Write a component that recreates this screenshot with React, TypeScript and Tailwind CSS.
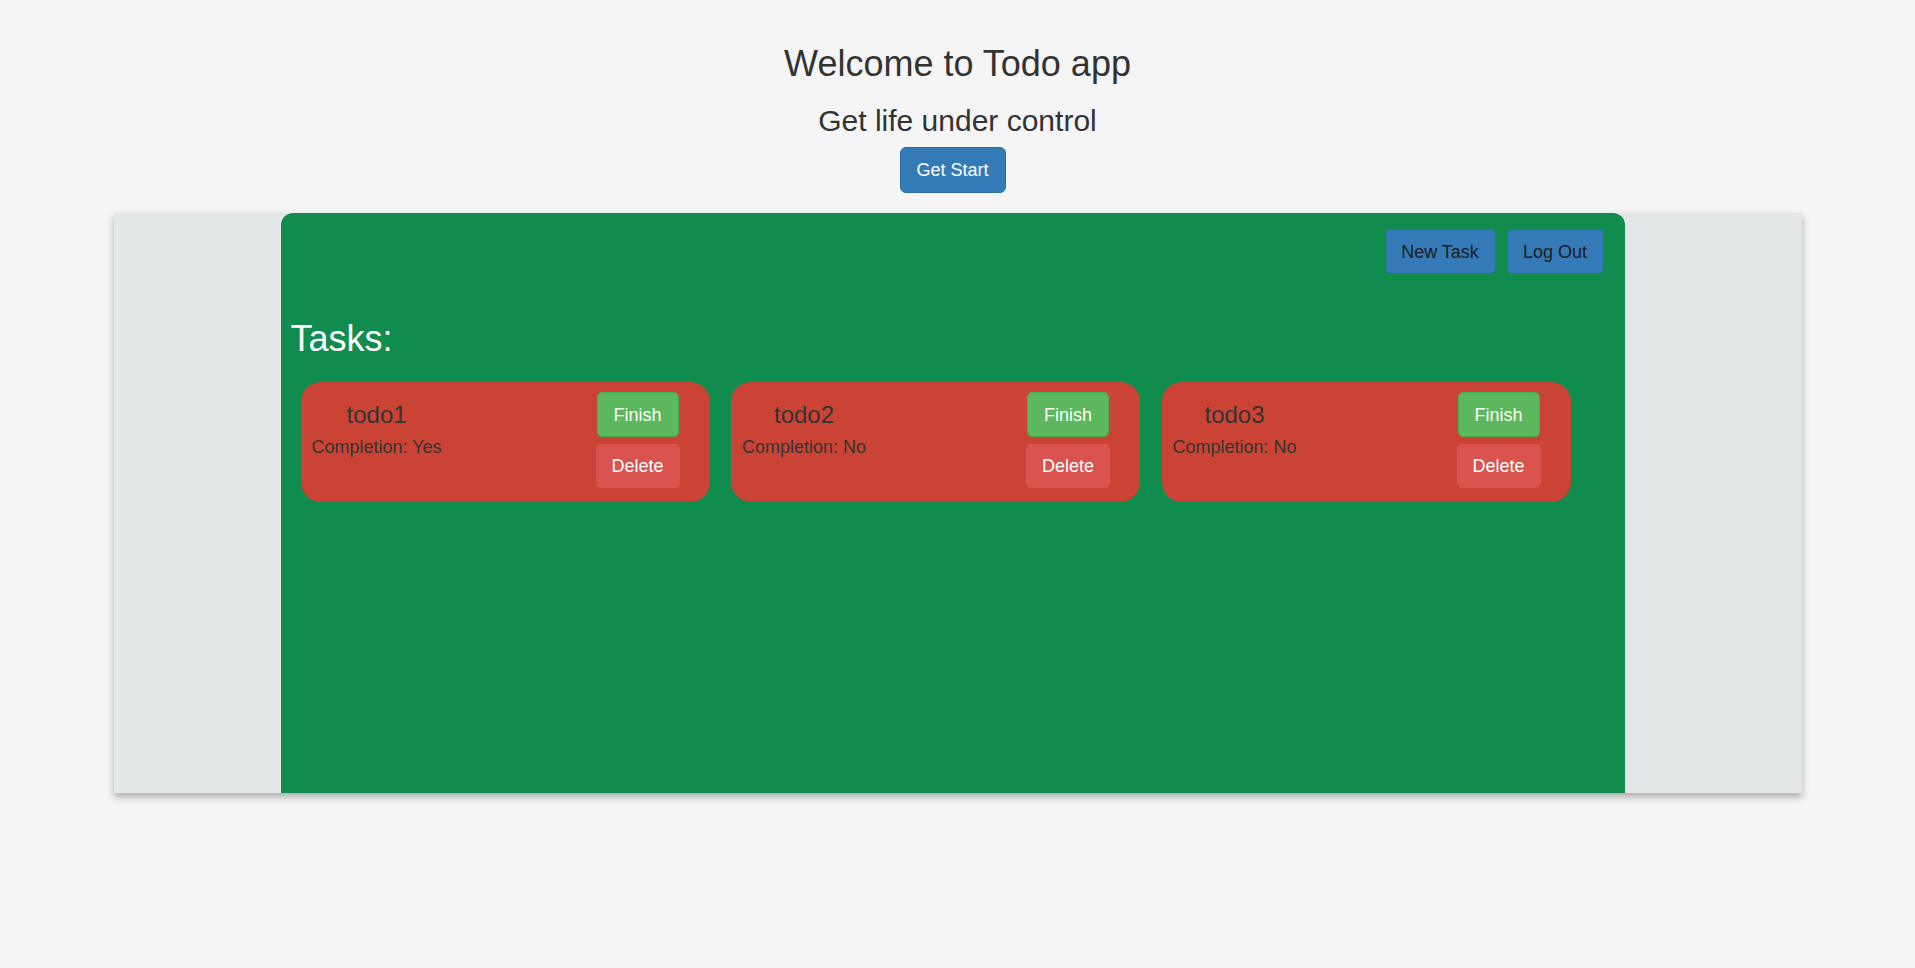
import React from "react";

const todos = [
  { name: "todo1", done: "Yes" },
  { name: "todo2", done: "No" },
  { name: "todo3", done: "No" },
];

export default function App() {
  return (
    <div className="min-h-[968px] bg-[#f5f5f5] font-['Liberation_Sans',Arial,sans-serif] text-[#333]">
      <div className="flex flex-col items-center pt-[44px]">
        <h1 className="text-[36px] leading-[40px] font-normal">Welcome to Todo app</h1>
        <h2 className="mt-[20px] text-[30px] leading-[33px] font-normal">Get life under control</h2>
        <button className="mr-[10px] mt-[10px] h-[46px] w-[106px] rounded-[6px] border border-[#2e6da4] bg-[#337ab7] text-center text-[18px] leading-[24px] text-white">
          Get Start
        </button>
      </div>
      <div className="mx-auto mt-[20px] flex h-[580px] w-[1688px] bg-[#e3e7e8] shadow-[0_4px_7px_rgba(0,0,0,0.3)]">
        <div className="w-[167px] shrink-0" />
        <div className="w-[1344px] shrink-0 rounded-t-[12px] bg-[#118c4f]">
          <div className="flex justify-end gap-[11px] pr-[21px] pt-[16px]">
            <button className="h-[45px] w-[111px] rounded-[5px] border border-[#2e6da4] bg-[#337ab7] text-center text-[18px] leading-[24px] text-[#1c1c1c]">
              New Task
            </button>
            <button className="h-[45px] w-[97px] rounded-[5px] border border-[#2e6da4] bg-[#337ab7] text-center text-[18px] leading-[24px] text-[#1c1c1c]">
              Log Out
            </button>
          </div>
          <h3 className="mt-[45px] pl-[10px] text-[36px] leading-[40px] font-normal text-white">Tasks:</h3>
          <div className="mt-[23px] flex gap-[21.5px] pl-[20px]">
            {todos.map((t) => (
              <div
                key={t.name}
                className="flex h-[120px] w-[409px] justify-between rounded-[20px] bg-[#cb4335] pl-[11px] pr-[30px]"
              >
                <div className="flex flex-col items-center">
                  <div className="mt-[20px] text-[24px] leading-[26px]">{t.name}</div>
                  <div className="mt-[9px] text-[18px] leading-[20px]">Completion: {t.done}</div>
                </div>
                <div className="flex w-[84px] flex-col items-center gap-[7px] pt-[10px]">
                  <button className="h-[45px] w-[82px] rounded-[5px] border border-[#4cae4c] bg-[#5cb85c] text-center text-[18px] leading-[24px] text-white">
                    Finish
                  </button>
                  <button className="h-[44px] w-[84px] rounded-[5px] border border-[#d9534f] bg-[#d9534f] text-center text-[18px] leading-[24px] text-white">
                    Delete
                  </button>
                </div>
              </div>
            ))}
          </div>
        </div>
      </div>
    </div>
  );
}
